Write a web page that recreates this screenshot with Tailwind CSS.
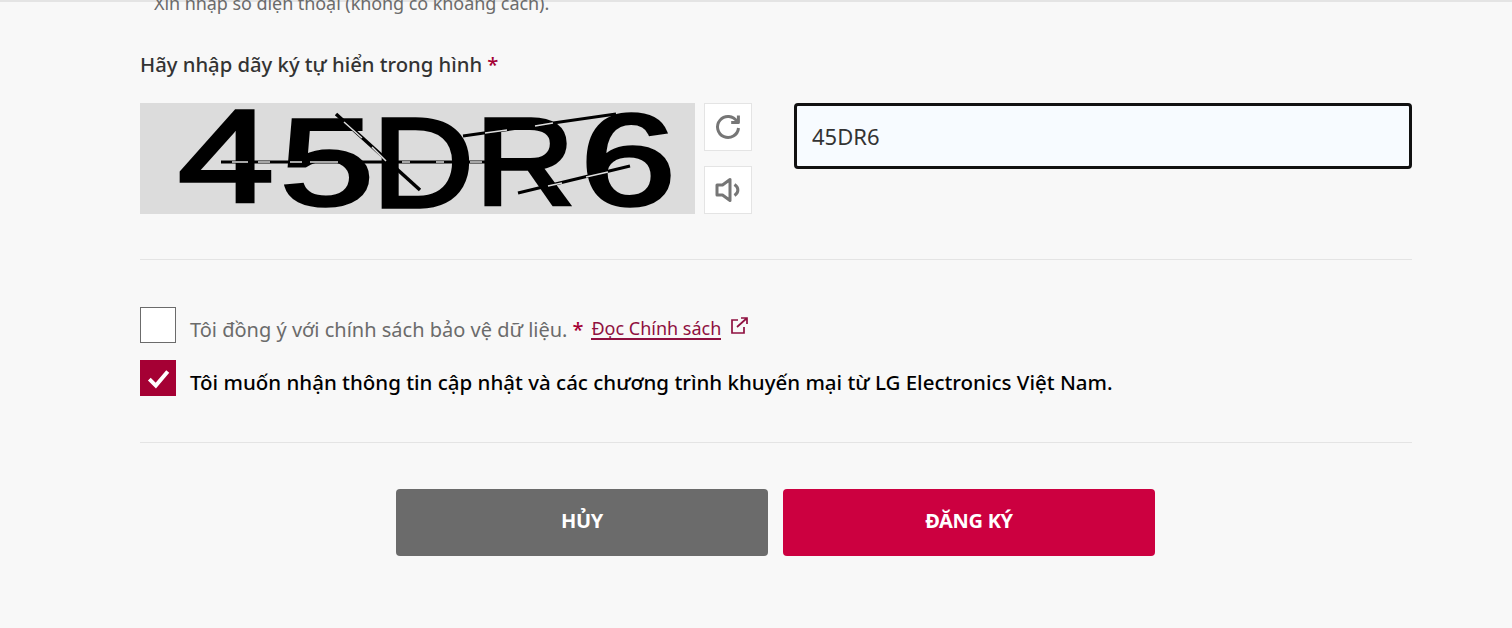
<!DOCTYPE html>
<html lang="vi">
<head>
<meta charset="utf-8">
<script src="https://cdn.jsdelivr.net/npm/@tailwindcss/browser@4"></script>
</head>
<body class="m-0 h-[628px] w-[1512px] overflow-hidden bg-[#f8f8f8] font-['Noto_Sans',sans-serif] text-[#333]">
<div class="h-[2px] bg-[#e4e4e4]"></div>
<div class="relative z-0 -mt-[9px] pl-[140px] pr-[100px]">
  <p class="pl-[14px] text-[18px] leading-[20px] tracking-[-0.07px] text-[#6b6b6b]">Xin nhập số điện thoại (không có khoảng cách).</p>
  <div class="mt-[36px] flex items-center text-[20.25px] font-medium leading-[30px] text-[#333]">Hãy nhập dãy ký tự hiển trong hình <span class="ml-[5px] text-[#a50034]">*</span></div>
  <div class="mt-[24px] flex items-start">
    <div class="h-[111px] w-[555px] shrink-0 bg-[#dcdcdc]">
      <svg viewBox="0 0 555 111" class="block h-full w-full blur-[0.4px]" role="img" aria-label="45DR6">
        <g fill="#000" stroke="#000" stroke-width="3.5" font-family="Liberation Sans, sans-serif">
          <text x="38" y="99" font-size="132" textLength="96" lengthAdjust="spacingAndGlyphs">4</text>
          <text x="140" y="102" font-size="122" textLength="94" lengthAdjust="spacingAndGlyphs">5</text>
          <text x="232" y="104" font-size="128" textLength="102" lengthAdjust="spacingAndGlyphs">D</text>
          <text x="335" y="102" font-size="125" textLength="100" lengthAdjust="spacingAndGlyphs">R</text>
          <text x="440" y="102" font-size="130" textLength="96" lengthAdjust="spacingAndGlyphs">6</text>
        </g>
        <g fill="none">
          <path d="M81 59H345" stroke="#000" stroke-width="3"/>
          <path d="M92 59h16M118 59h12M150 59h12M170 59h28M262 59h8M296 59h8M330 59h12" stroke="#ddd" stroke-width="1.5"/>
          <path d="M196 11L280 87" stroke="#000" stroke-width="3.5"/>
          <path d="M204 19l18 16M232 44l14 14" stroke="#ddd" stroke-width="1.5"/>
          <path d="M323 33L476 11" stroke="#000" stroke-width="3"/>
          <path d="M345 30l22-3M395 23l18-3" stroke="#ddd" stroke-width="1.5"/>
          <path d="M378 90L490 63" stroke="#000" stroke-width="3"/>
          <path d="M408 83l14-3M446 74l22-5" stroke="#ddd" stroke-width="1.5"/>
        </g>
      </svg>
    </div>
    <div class="ml-[9px] flex shrink-0 flex-col gap-[15px]">
      <button class="flex h-[48px] w-[48px] items-center justify-center border border-[#e4e4e4] bg-white">
        <svg viewBox="0 0 28 28" class="h-[28px] w-[28px]" fill="none" stroke="#767676" stroke-width="3"><path d="M23 8.5A10.5 10.5 0 1 0 24.5 15"/><path d="M24.4 2.6V9.6H17.2" stroke-linejoin="round"/></svg>
      </button>
      <button class="flex h-[48px] w-[48px] items-center justify-center border border-[#e4e4e4] bg-white">
        <svg viewBox="0 0 28 28" class="h-[28px] w-[28px]" fill="none" stroke="#767676" stroke-width="3" stroke-linejoin="round"><path d="M3 9H8.5L16 3.5V24.5L8.5 19H3Z"/><path d="M20.5 8.5C25 11.5 25 16.5 20.5 19.5"/></svg>
      </button>
    </div>
    <input value="45DR6" class="ml-[42px] h-[66px] flex-1 rounded-[4px] border-[3px] border-[#111] bg-[#f7fbff] px-[15px] text-[22px] text-[#333] outline-none">
  </div>
  <div class="mt-[45px] h-px bg-[#e4e4e4]"></div>
  <div class="mt-[47px] flex h-[36px] items-start">
    <span class="h-[36px] w-[36px] shrink-0 border border-[#6b6b6b] bg-white"></span>
    <span class="ml-[14px] mt-[8px] text-[20px] leading-[30px] text-[#6b6b6b]">Tôi đồng ý với chính sách bảo vệ dữ liệu.</span>
    <span class="ml-[5px] mt-[8px] text-[20px] font-medium leading-[30px] text-[#a50034]">*</span>
    <a class="ml-[8px] mt-[11px] border-b-2 border-[#8f1040] text-[18px] leading-[20px] text-[#8f1040]">Đọc Chính sách</a>
    <svg viewBox="0 0 20 20" class="ml-[8px] mt-[9px] h-[20px] w-[20px]" fill="none" stroke="#8f1040" stroke-width="1.7"><path d="M9 4H3V17H15V11"/><path d="M8 11L17.5 2.5M12 2H18V8"/></svg>
  </div>
  <div class="mt-[17px] flex h-[36px] items-start">
    <span class="flex h-[36px] w-[36px] shrink-0 items-center justify-center bg-[#a50034]">
      <svg viewBox="0 0 24 24" class="h-[26px] w-[26px]" fill="none" stroke="#fff" stroke-width="3.6"><path d="M4 13L10 19L21 6"/></svg>
    </span>
    <span class="ml-[14px] mt-[7px] text-[20.5px] font-medium leading-[30px] text-black">Tôi muốn nhận thông tin cập nhật và các chương trình khuyến mại từ LG Electronics Việt Nam.</span>
  </div>
  <div class="mt-[46px] h-px bg-[#e4e4e4]"></div>
  <div class="mr-[1px] mt-[46px] flex justify-center gap-[15px]">
    <button class="h-[67px] w-[372px] rounded-[4px] bg-[#6b6b6b] pb-[3px] text-[20px] font-bold tracking-[-0.3px] text-white">HỦY</button>
    <button class="h-[67px] w-[372px] rounded-[4px] bg-[#cc0040] pb-[3px] text-[20px] font-bold tracking-[-0.3px] text-white">ĐĂNG KÝ</button>
  </div>
</div>
</body>
</html>
